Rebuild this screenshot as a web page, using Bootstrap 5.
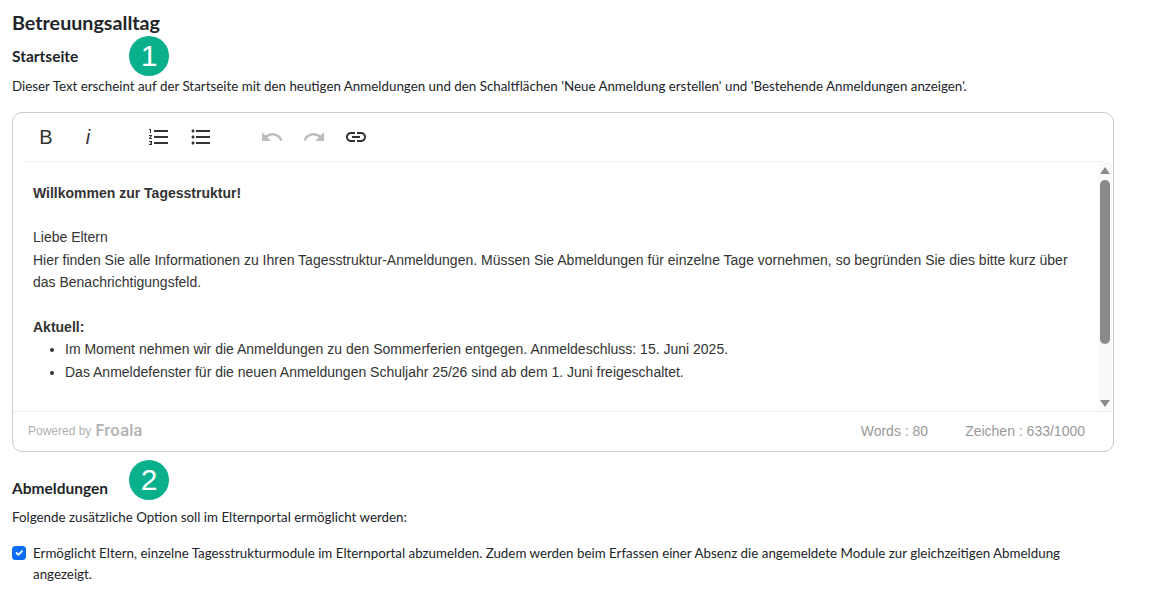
<!DOCTYPE html>
<html lang="de">
<head>
<meta charset="utf-8">
<title>Betreuungsalltag</title>
<link rel="stylesheet" href="https://cdn.jsdelivr.net/npm/bootstrap@5.3.0/dist/css/bootstrap.min.css">
<style>
html,body{height:604px;overflow:hidden}
body{font-family:Lato,"Noto Sans",sans-serif;font-size:13px;color:#212529;background:#fff;padding:0 12px}
.sec-title{font-size:19.7px;font-weight:700;line-height:24px;margin:11px 0 0}
.sub-title{font-size:15.5px;font-weight:700;line-height:20px;margin:0;position:relative}
.desc{font-size:13.35px;line-height:20px;margin:0}
.start-title{margin-top:11px}
.start-desc{margin-top:10px}
.num-badge{position:absolute;left:117px;width:40px;height:40px;border-radius:50%;background:#0aaf8c;color:#fff;font:30px/40px "Liberation Sans",sans-serif;text-align:center}
.editor-box{width:1102px;height:340px;margin-top:16px;border:1px solid #ccc;border-radius:10px;background:#fff}
.fr-bar{height:49px;margin:0 10px;border-bottom:1px solid #efefef;padding-left:2px}
.fr-btn{width:42px;height:24px;display:flex;align-items:center;justify-content:center;color:#333;font:20px/24px "Liberation Sans",sans-serif}
.fr-btn svg{width:24px;height:24px;fill:#333}
.fr-btn.off svg{fill:#bdbdbd}
.fr-gap{width:29px}
.fr-mid{height:249px}
.fr-text{width:1085px;padding:19.6px 20px 0;font:14px/22.4px "Liberation Sans",sans-serif;color:#333;overflow:hidden}
.fr-text ul{margin:0;padding-left:32px}
.fr-track{width:14px;background:#fafafa;padding:3px 2px}
.fr-thumb{flex:none;width:10px;height:164px;background:#8a8a8a;border-radius:5px;margin:6px 0 0}
.tri-up,.tri-down{flex:none;width:0;height:0;margin:2px auto 0;border-left:5px solid transparent;border-right:5px solid transparent}
.tri-up{border-bottom:7px solid #8a8a8a}
.tri-down{border-top:7px solid #8a8a8a;margin-top:auto;margin-bottom:1px}
.fr-foot{height:40px;border-top:1px solid #efefef;padding:0 28px 2px 15px;font:14px/20px "Liberation Sans",sans-serif;color:#999}
.powered{font-size:12px;color:#b0b0b0}
.froala-mark{font:600 15.5px/20px Inter,sans-serif;color:#b3b3b3;margin-left:4px;letter-spacing:.2px}
.foot-stats{gap:37px}
.abm-title{margin-top:26px}
.abm-desc{margin-top:9px}
.chk-row{width:1080px;margin-top:16px;line-height:21px;font-size:13.35px}
.chk-row .form-check-input{width:14px;height:14px;margin-top:3px;margin-right:7px;flex:none;border-radius:3px}
</style>
</head>
<body>
<h1 class="sec-title">Betreuungsalltag</h1>
<h2 class="sub-title start-title">Startseite<span class="num-badge" style="top:-10px">1</span></h2>
<p class="desc start-desc">Dieser Text erscheint auf der Startseite mit den heutigen Anmeldungen und den Schaltflächen 'Neue Anmeldung erstellen' und 'Bestehende Anmeldungen anzeigen'.</p>
<div class="editor-box d-flex flex-column">
  <div class="fr-bar d-flex align-items-center">
    <span class="fr-btn">B</span>
    <span class="fr-btn fst-italic">i</span>
    <span class="fr-gap"></span>
    <span class="fr-btn"><svg viewBox="0 0 24 24"><path d="M2 17h2v.5H3v1h1v.5H2v1h3v-4H2v1zm1-9h1V4H2v1h1v3zm-1 3h1.8L2 13.1v.9h3v-1H3.2L5 10.9V10H2v1zm5-6v2h14V5H7zm0 14h14v-2H7v2zm0-6h14v-2H7v2z"/></svg></span>
    <span class="fr-btn"><svg viewBox="0 0 24 24"><path d="M4 10.5c-.83 0-1.5.67-1.5 1.5s.67 1.5 1.5 1.5 1.5-.67 1.5-1.5-.67-1.5-1.5-1.5zm0-6c-.83 0-1.5.67-1.5 1.5S3.17 7.5 4 7.5 5.5 6.83 5.5 6 4.83 4.5 4 4.5zm0 12c-.83 0-1.5.68-1.5 1.5s.68 1.5 1.5 1.5 1.5-.68 1.5-1.5-.67-1.5-1.5-1.5zM7 19h14v-2H7v2zm0-6h14v-2H7v2zm0-8v2h14V5H7z"/></svg></span>
    <span class="fr-gap"></span>
    <span class="fr-btn off"><svg viewBox="0 0 24 24"><path d="M12.5 8c-2.65 0-5.05.99-6.9 2.6L2 7v9h9l-3.62-3.62c1.39-1.16 3.16-1.88 5.12-1.88 3.54 0 6.55 2.31 7.6 5.5l2.37-.78C21.08 11.03 17.15 8 12.5 8z"/></svg></span>
    <span class="fr-btn off"><svg viewBox="0 0 24 24"><path d="M18.4 10.6C16.55 8.99 14.15 8 11.5 8c-4.65 0-8.58 3.03-9.96 7.22L3.9 16c1.05-3.19 4.05-5.5 7.6-5.5 1.95 0 3.73.72 5.12 1.88L13 16h9V7l-3.6 3.6z"/></svg></span>
    <span class="fr-btn"><svg viewBox="0 0 24 24"><path d="M3.9 12c0-1.71 1.39-3.1 3.1-3.1h4V7H7c-2.76 0-5 2.24-5 5s2.24 5 5 5h4v-1.9H7c-1.71 0-3.1-1.39-3.1-3.1zM8 13h8v-2H8v2zm9-6h-4v1.9h4c1.71 0 3.1 1.39 3.1 3.1s-1.39 3.1-3.1 3.1h-4V17h4c2.76 0 5-2.24 5-5s-2.24-5-5-5z"/></svg></span>
  </div>
  <div class="fr-mid d-flex">
    <div class="fr-text">
      <div class="fw-bold">Willkommen zur Tagesstruktur!</div>
      <div>&nbsp;</div>
      <div>Liebe Eltern</div>
      <div>Hier finden Sie alle Informationen zu Ihren Tagesstruktur-Anmeldungen. Müssen Sie Abmeldungen für einzelne Tage vornehmen, so begründen Sie dies bitte kurz über das Benachrichtigungsfeld.</div>
      <div>&nbsp;</div>
      <div class="fw-bold">Aktuell:</div>
      <ul>
        <li>Im Moment nehmen wir die Anmeldungen zu den Sommerferien entgegen. Anmeldeschluss: 15. Juni 2025.</li>
        <li>Das Anmeldefenster für die neuen Anmeldungen Schuljahr 25/26 sind ab dem 1. Juni freigeschaltet.</li>
      </ul>
    </div>
    <div class="fr-track d-flex flex-column">
      <div class="tri-up"></div>
      <div class="fr-thumb"></div>
      <div class="tri-down"></div>
    </div>
  </div>
  <div class="fr-foot d-flex align-items-center justify-content-between">
    <div class="d-flex align-items-center"><span class="powered">Powered by</span><span class="froala-mark">Froala</span></div>
    <div class="d-flex foot-stats"><span>Words : 80</span><span>Zeichen : 633/1000</span></div>
  </div>
</div>
<h2 class="sub-title abm-title">Abmeldungen<span class="num-badge" style="top:-18px">2</span></h2>
<p class="desc abm-desc">Folgende zusätzliche Option soll im Elternportal ermöglicht werden:</p>
<div class="chk-row d-flex">
  <input class="form-check-input" type="checkbox" checked aria-label="Abmeldung">
  <span>Ermöglicht Eltern, einzelne Tagesstrukturmodule im Elternportal abzumelden. Zudem werden beim Erfassen einer Absenz die angemeldete Module zur gleichzeitigen Abmeldung angezeigt.</span>
</div>
<script src="https://cdn.jsdelivr.net/npm/bootstrap@5.3.0/dist/js/bootstrap.bundle.min.js"></script>
</body>
</html>
